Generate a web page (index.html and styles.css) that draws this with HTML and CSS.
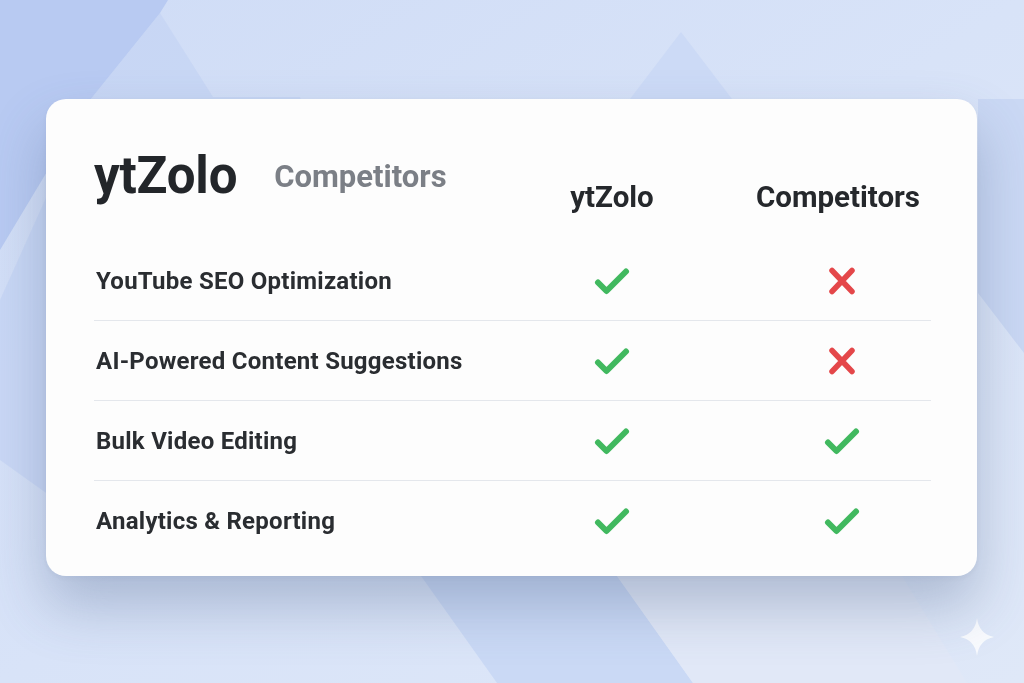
FILE: index.html
```html
<!DOCTYPE html>
<html lang="en">
<head>
<meta charset="utf-8">
<title>ytZolo vs Competitors</title>
<link rel="stylesheet" href="styles.css">
</head>
<body>
<svg class="bg-art" width="1024" height="683" viewBox="0 0 1024 683" aria-hidden="true">
  <defs>
    <linearGradient id="base" x1="0" y1="0" x2="1" y2="1">
      <stop offset="0" stop-color="#cfdcf6"/>
      <stop offset="0.5" stop-color="#d8e3f8"/>
      <stop offset="1" stop-color="#dfe8f8"/>
    </linearGradient>
  </defs>
  <rect width="1024" height="683" fill="url(#base)"/>
  <polygon points="160,13 90,100 0,300 0,460 140,560 420,576 300,97 213,97" fill="#c6d5f4" opacity="0.8"/>
  <polygon points="0,0 168,0 160,13 90,100 0,250" fill="#b8caf2"/>
  <polygon points="681,32 630,99 732,99" fill="#ccdaf6"/>
  <polygon points="978,99 1024,99 1024,353 978,293" fill="#cad8f4"/>
  <polygon points="421,576 617,576 693,683 497,683" fill="#cad9f5"/>
  <polygon points="617,576 902,576 967,683 693,683" fill="#e1e8f7"/>
  <path d="M977 618 Q979 634 994 637 Q979 640 977 656 Q975 640 960 637 Q975 634 977 618 Z" fill="#ffffff" opacity="0.8"/>
</svg>

<main class="stage">
  <section class="card">
    <div class="head">
      <div class="brand">
        <span class="logo">ytZolo</span>
        <span class="vs">Competitors</span>
      </div>
      <div class="col-h">ytZolo</div>
      <div class="col-h">Competitors</div>
    </div>

    <div class="row">
      <div class="feat">YouTube SEO Optimization</div>
      <div class="cell"><svg class="ic" width="38" height="28" viewBox="0 0 38 28"><path class="chk" d="M5 15.5 L13.5 24 L33 4.5"/></svg></div>
      <div class="cell alt"><svg class="ic" width="30" height="28" viewBox="0 0 30 28"><path class="crs" d="M5 3.5 L25 24.5 M25 3.5 L5 24.5"/></svg></div>
    </div>
    <div class="row">
      <div class="feat">AI-Powered Content Suggestions</div>
      <div class="cell"><svg class="ic" width="38" height="28" viewBox="0 0 38 28"><path class="chk" d="M5 15.5 L13.5 24 L33 4.5"/></svg></div>
      <div class="cell alt"><svg class="ic" width="30" height="28" viewBox="0 0 30 28"><path class="crs" d="M5 3.5 L25 24.5 M25 3.5 L5 24.5"/></svg></div>
    </div>
    <div class="row">
      <div class="feat">Bulk Video Editing</div>
      <div class="cell"><svg class="ic" width="38" height="28" viewBox="0 0 38 28"><path class="chk" d="M5 15.5 L13.5 24 L33 4.5"/></svg></div>
      <div class="cell alt"><svg class="ic" width="38" height="28" viewBox="0 0 38 28"><path class="chk" d="M5 15.5 L13.5 24 L33 4.5"/></svg></div>
    </div>
    <div class="row last">
      <div class="feat">Analytics &amp; Reporting</div>
      <div class="cell"><svg class="ic" width="38" height="28" viewBox="0 0 38 28"><path class="chk" d="M5 15.5 L13.5 24 L33 4.5"/></svg></div>
      <div class="cell alt"><svg class="ic" width="38" height="28" viewBox="0 0 38 28"><path class="chk" d="M5 15.5 L13.5 24 L33 4.5"/></svg></div>
    </div>
  </section>
</main>
</body>
</html>
```

FILE: styles.css
```css
* { box-sizing: border-box; }

html, body {
  margin: 0;
  width: 1024px;
  height: 683px;
  overflow: hidden;
  background: #d6e2f7;
  font-family: Roboto, "Liberation Sans", Arial, sans-serif;
  color: #25282c;
}

.bg-art {
  position: fixed;
  left: 0;
  top: 0;
  z-index: 0;
  display: block;
}

.stage {
  position: relative;
  z-index: 1;
  padding: 99px 0 0 46px;
}

.card {
  width: 931px;
  height: 477px;
  background: #fdfdfd;
  border-radius: 20px;
  padding: 0 46px 0 48px;
  box-shadow: 0 30px 56px rgba(70, 92, 135, 0.32), 0 2px 6px rgba(40, 60, 100, 0.06);
}

.head,
.row {
  display: grid;
  grid-template-columns: 1fr 186px 186px;
  column-gap: 40px;
}

.head {
  height: 142px;
  align-items: start;
}

.brand {
  display: flex;
  align-items: flex-start;
  gap: 37px;
  padding-top: 51px;
}

.logo {
  font-size: 51px;
  line-height: 1;
  font-weight: 700;
  color: #23262a;
  letter-spacing: -0.2px;
}

.vs {
  margin-top: 11px;
  font-size: 31px;
  line-height: 1;
  font-weight: 700;
  color: #7b7f86;
}

.col-h {
  padding-top: 84px;
  font-size: 29.5px;
  line-height: 1;
  font-weight: 700;
  text-align: center;
  color: #25282c;
}

.row {
  height: 80px;
  align-items: center;
  border-bottom: 1px solid #e4e7ec;
}

.row.last {
  border-bottom: none;
}

.feat {
  padding-left: 2px;
  font-size: 24px;
  font-weight: 700;
  letter-spacing: 0.25px;
  color: #2a2d31;
}

.cell {
  display: flex;
  justify-content: center;
  align-items: center;
}

.cell.alt {
  padding-left: 8px;
}

.ic {
  display: block;
}

.chk {
  fill: none;
  stroke: #41b95f;
  stroke-width: 6;
  stroke-linecap: round;
  stroke-linejoin: round;
}

.crs {
  fill: none;
  stroke: #e4474a;
  stroke-width: 5.5;
  stroke-linecap: round;
}
```
